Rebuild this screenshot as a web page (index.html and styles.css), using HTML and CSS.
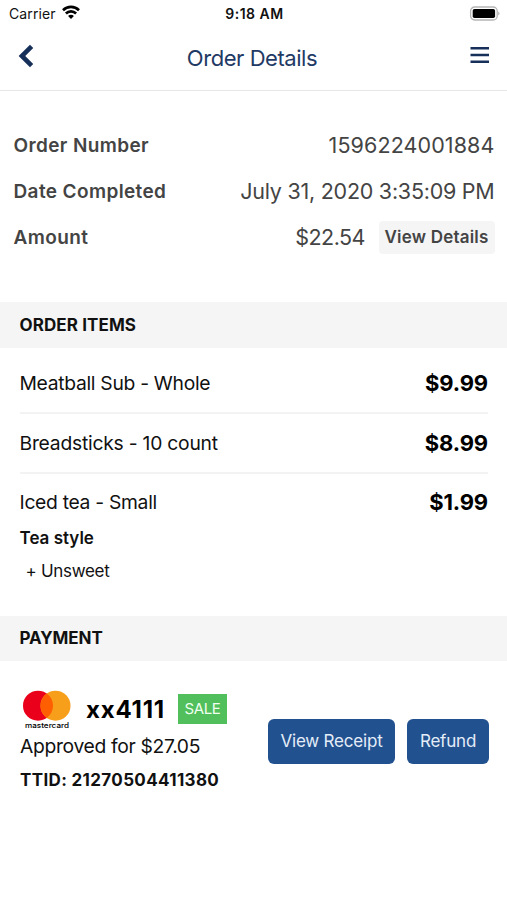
FILE: index.html
```html
<!DOCTYPE html>
<html lang="en">
<head>
    <meta charset="UTF-8">
    <title>Order Details</title>
    <link rel="stylesheet" href="styles.css">
</head>
<body>
<div class="status-bar">
    <div class="carrier">
        <span>Carrier</span>
        <svg class="wifi" width="18" height="14" viewBox="0 0 18 14" fill="none" stroke="#000" stroke-width="2.6">
            <path d="M1 5.2a11.4 11.4 0 0 1 16 0"/>
            <path d="M3.9 8.5a7.2 7.2 0 0 1 10.2 0"/>
            <path d="M9 14L6.1 11a4 4 0 0 1 5.8 0z" fill="#000" stroke="none"/>
        </svg>
    </div>
    <span class="clock">9:18 AM</span>
    <svg class="battery" width="31" height="15" viewBox="0 0 31 15">
        <rect x="1.6" y="1" width="26.6" height="13" rx="4" fill="#fff" stroke="#b5b5b5" stroke-width="1.3"/>
        <rect x="3.7" y="3" width="22.4" height="9" rx="1.8" fill="#000"/>
        <path d="M29.2 5.5a2.2 2.2 0 0 1 0 4z" fill="#b5b5b5"/>
    </svg>
</div>

<header class="navbar">
    <svg class="back" width="16" height="24" viewBox="0 0 16 24" fill="none" stroke="#17305a" stroke-width="4.6">
        <path d="M13.6 2.4L3.9 12L13.6 21.6"/>
    </svg>
    <h1 class="title">Order Details</h1>
    <svg class="menu" width="20" height="18" viewBox="0 0 20 18" stroke="#17305a" stroke-width="2.4">
        <path d="M0.5 2.3h18.5M0.5 9h18.5M0.5 15.7h18.5"/>
    </svg>
</header>

<section class="summary">
    <div class="summary-row">
        <span class="label">Order Number</span>
        <span class="value number">1596224001884</span>
    </div>
    <div class="summary-row">
        <span class="label">Date Completed</span>
        <span class="value date">July 31, 2020 3:35:09 PM</span>
    </div>
    <div class="summary-row">
        <span class="label">Amount</span>
        <span class="value amount">$22.54</span>
        <button type="button" class="details-btn">View Details</button>
    </div>
</section>

<h2 class="section-title">ORDER ITEMS</h2>
<ul class="items">
    <li class="item">
        <div class="item-row"><span class="name">Meatball Sub - Whole</span><span class="price">$9.99</span></div>
    </li>
    <li class="item">
        <div class="item-row"><span class="name wide">Breadsticks - 10 count</span><span class="price">$8.99</span></div>
    </li>
    <li class="item">
        <div class="item-row"><span class="name">Iced tea - Small</span><span class="price">$1.99</span></div>
        <div class="option-title">Tea style</div>
        <div class="option">+ Unsweet</div>
    </li>
</ul>

<h2 class="section-title payment-title">PAYMENT</h2>
<section class="payment">
    <div class="payment-info">
        <div class="card-row">
            <svg class="mastercard" width="52" height="40" viewBox="0 0 52 40">
                <circle cx="18" cy="15.7" r="15" fill="#eb001b"/>
                <circle cx="35.5" cy="15.7" r="15" fill="#f79e1b"/>
                <path d="M26.75 3.5a15 15 0 0 1 0 24.4a15 15 0 0 1 0-24.4z" fill="#ff5f00"/>
                <text x="5" y="37.6" textLength="44" lengthAdjust="spacingAndGlyphs" class="brand">mastercard</text>
            </svg>
            <span class="card-number">xx4111</span>
            <span class="badge">SALE</span>
        </div>
        <div class="approved">Approved for $27.05</div>
        <div class="ttid">TTID: 21270504411380</div>
    </div>
    <div class="actions">
        <button type="button" class="btn">View Receipt</button>
        <button type="button" class="btn refund">Refund</button>
    </div>
</section>
</body>
</html>
```
FILE: styles.css
```css
* {
    box-sizing: border-box;
}
body {
    margin: 0;
    background: #fff;
    color: #111;
    font-family: Inter, "Liberation Sans", sans-serif;
}
h1, h2, ul {
    margin: 0;
    padding: 0;
}
button {
    border: none;
    font-family: inherit;
}
svg {
    display: block;
}
.status-bar {
    display: grid;
    grid-template-columns: 1fr auto 1fr;
    align-items: center;
    height: 27px;
    padding: 0 7px 0 9px;
    font-size: 14px;
}
.carrier {
    display: flex;
    align-items: center;
    gap: 6px;
    letter-spacing: 0.1px;
}
.wifi {
    margin-bottom: 3px;
}
.clock {
    font-weight: 600;
    letter-spacing: 0.5px;
}
.battery {
    justify-self: end;
    margin-bottom: 1px;
}
.navbar {
    display: flex;
    align-items: center;
    justify-content: space-between;
    height: 64px;
    padding: 0 17px 2px 18px;
    border-bottom: 1px solid #e6e6e6;
}
.back {
    margin-bottom: 4px;
}
.title {
    color: #1f3a64;
    font-size: 22px;
    font-weight: 400;
    letter-spacing: -0.45px;
}
.menu {
    margin-bottom: 6px;
}
.summary {
    height: 211px;
    padding: 31px 12.5px 0 13.5px;
    color: #444;
}
.summary-row {
    display: flex;
    align-items: center;
    height: 46px;
}
.label {
    font-size: 19px;
    font-weight: 600;
    letter-spacing: 0.38px;
}
.value {
    margin-left: auto;
    font-size: 21.5px;
}
.number {
    letter-spacing: 0.1px;
}
.date {
    letter-spacing: -0.25px;
}
.amount {
    letter-spacing: -0.5px;
}
.details-btn {
    height: 33px;
    margin-left: 13.5px;
    padding: 0 6px;
    border-radius: 4px;
    background: #f5f5f5;
    color: #444;
    font-size: 17px;
    font-weight: 600;
    letter-spacing: 0.2px;
}
.section-title {
    display: flex;
    align-items: center;
    height: 46px;
    padding-left: 19.5px;
    background: #f5f5f5;
    font-size: 17px;
    font-weight: 650;
    letter-spacing: 0.1px;
}
.payment-title {
    height: 45px;
    padding-bottom: 1px;
    letter-spacing: -0.1px;
}
.items {
    height: 268px;
    padding: 6px 19px 0 19.5px;
    list-style: none;
}
.item + .item {
    border-top: 2px solid #f3f3f3;
}
.item-row {
    display: flex;
    align-items: center;
    justify-content: space-between;
    height: 57.5px;
}
.item:first-child .item-row {
    height: 58px;
}
.name {
    font-size: 19.3px;
    letter-spacing: -0.3px;
}
.wide {
    letter-spacing: -0.23px;
}
.price {
    color: #000;
    font-size: 22px;
    font-weight: 700;
    letter-spacing: -0.15px;
}
.option-title {
    margin-top: -6px;
    font-size: 17px;
    font-weight: 600;
    line-height: 26px;
}
.option {
    padding-left: 6px;
    font-size: 17px;
    line-height: 40px;
    letter-spacing: -0.3px;
}
.payment {
    display: flex;
    align-items: flex-start;
    justify-content: space-between;
    padding: 29px 18px 0 20px;
}
.card-row {
    display: flex;
    align-items: center;
    height: 40px;
}
.brand {
    font-size: 7.3px;
    font-weight: 500;
}
.card-number {
    margin: 0 0 1px 14px;
    color: #000;
    font-size: 24px;
    font-weight: 700;
    letter-spacing: 0.8px;
}
.badge {
    margin: 0 0 2px 13px;
    padding: 0 6.5px;
    background: #51bf5b;
    color: #effff0;
    font-size: 15px;
    line-height: 30px;
    letter-spacing: -0.4px;
}
.approved {
    font-size: 19.3px;
    line-height: 32px;
    letter-spacing: -0.33px;
}
.ttid {
    font-size: 17px;
    font-weight: 650;
    line-height: 37px;
    letter-spacing: 0.35px;
}
.actions {
    display: flex;
    gap: 12px;
    padding-top: 28.5px;
}
.btn {
    width: 127px;
    height: 45px;
    padding: 0;
    border-radius: 6px;
    background: #22518f;
    color: #e4edf8;
    font-size: 17px;
    letter-spacing: -0.2px;
}
.refund {
    width: 82px;
}
```
